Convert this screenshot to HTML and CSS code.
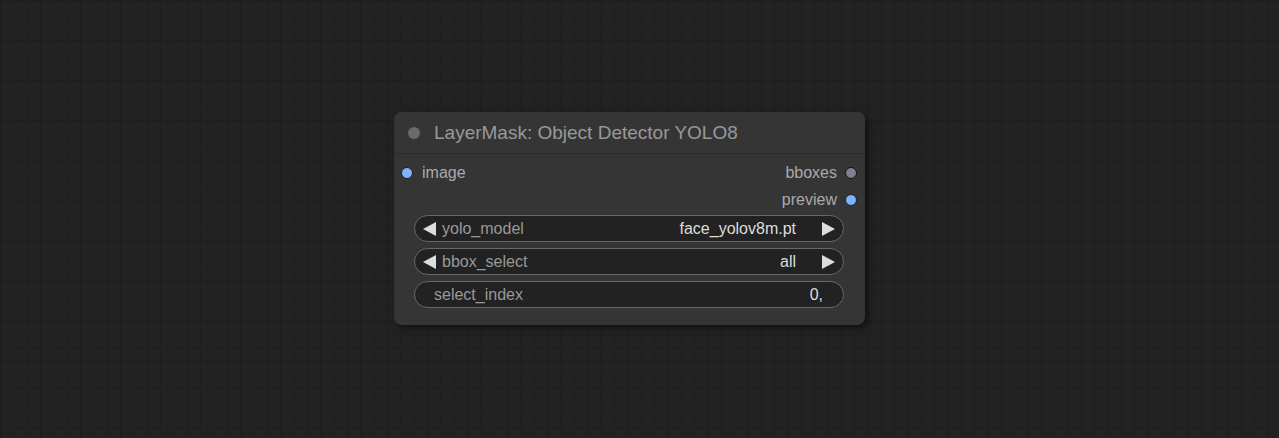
FILE: index.html
```html
<!DOCTYPE html>
<html>
<head>
<meta charset="utf-8">
<link rel="stylesheet" href="styles.css">
</head>
<body>
<div class="canvas">
  <div class="node">
    <div class="title">
      <span class="tdot"></span>
      <span class="ttext">LayerMask: Object Detector YOLO8</span>
    </div>
    <div class="body">
      <div class="slots">
        <div class="slot-row">
          <div class="in"><span class="dot blue"></span><span>image</span></div>
          <div class="out"><span>bboxes</span><span class="dot grey"></span></div>
        </div>
        <div class="slot-row">
          <div class="in"></div>
          <div class="out"><span>preview</span><span class="dot blue"></span></div>
        </div>
      </div>
      <div class="widgets">
        <div class="widget">
          <span class="tri left"></span><span class="label">yolo_model</span><span class="value">face_yolov8m.pt</span><span class="tri right"></span>
        </div>
        <div class="widget">
          <span class="tri left"></span><span class="label">bbox_select</span><span class="value">all</span><span class="tri right"></span>
        </div>
        <div class="widget num">
          <span class="label">select_index</span><span class="value">0,</span>
        </div>
      </div>
    </div>
  </div>
</div>
</body>
</html>
```
FILE: styles.css
```css
html, body { margin: 0; padding: 0; }
body {
  width: 1279px; height: 438px; overflow: hidden;
  background-color: #222222;
  background-image:
    linear-gradient(to right, #1d1d1d 1px, transparent 1px),
    linear-gradient(to bottom, #1d1d1d 1px, transparent 1px);
  background-size: 13.35px 13.35px;
  font-family: Arial, "Liberation Sans", sans-serif;
}
.canvas { padding: 112px 0 0 394px; }
.node {
  width: 471px; height: 213px;
  background: #353535;
  border-radius: 8px;
  box-shadow: 3px 3px 6px rgba(0,0,0,0.5);
  box-sizing: border-box;
  display: flex; flex-direction: column;
}
.title {
  height: 41px;
  border-bottom: 1px solid #2b2b2b;
  display: flex; align-items: center;
  padding-left: 14px;
  border-radius: 8px 8px 0 0;
  background: #353535;
}
.tdot { width: 12px; height: 12px; border-radius: 50%; background: #6a6a6a; margin-right: 14px; }
.ttext { color: #999; font-size: 19px; padding-top: 1px; }
.body { padding-top: 5px; }
.slot-row { height: 27px; display: flex; justify-content: space-between; align-items: center; font-size: 16px; color: #aaa; }
.in { display: flex; align-items: center; padding-left: 7px; }
.in .dot { margin-right: 9px; }
.out { display: flex; align-items: center; padding-right: 8px; }
.out .dot { margin-left: 8px; }
.dot { width: 12px; height: 12px; border-radius: 50%; box-sizing: border-box; border: 1px solid #111; }
.dot.blue { background: #7eb3ff; border-color: #1e1e1e; }
.dot.grey { background: #7f7f8f; border-color: #111; }
.widgets { display: flex; flex-direction: column; gap: 6px; padding: 0 21px 0 20px; margin-top: 2px; }
.widget {
  height: 27px; box-sizing: border-box;
  border: 1px solid #686868; border-radius: 14px;
  background: #222;
  display: flex; align-items: center;
  font-size: 16px; color: #999;
  padding: 0 8px 0 8px;
}
.tri { width: 0; height: 0; border-top: 7px solid transparent; border-bottom: 7px solid transparent; }
.tri.left { border-right: 13px solid #ddd; }
.tri.right { border-left: 13px solid #ddd; margin-left: 26px; }
.label { margin-left: 6px; flex: 1; }
.value { color: #ddd; }
.widget.num .label { margin-left: 11px; }
.widget.num .value { margin-right: 12px; }
```
